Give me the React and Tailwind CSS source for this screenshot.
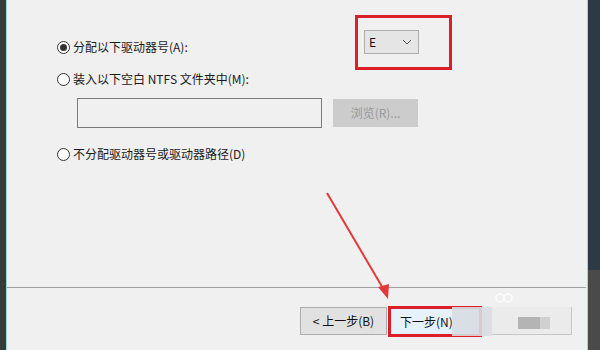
const FONT = { fontFamily: '"Microsoft YaHei", "Noto Sans CJK SC", "Liberation Sans", sans-serif' }

function Radio({ checked, label }) {
  return (
    <div className="flex items-center h-[16px]">
      <span className="w-[13px] h-[13px] rounded-full border border-[#333] bg-white flex items-center justify-center shrink-0">
        {checked && <span className="w-[7px] h-[7px] rounded-full bg-[#333]" />}
      </span>
      <span className="ml-[3px] text-[12px] leading-[16px] text-[#1a1a1a] whitespace-nowrap">{label}</span>
    </div>
  )
}

export default function App() {
  return (
    <div className="w-[600px] h-[350px] flex bg-[#f0f0f0] relative overflow-hidden" style={FONT}>
      <div className="w-[6px] bg-[#363d39]" />
      <div className="w-px bg-[#9fd3e0]" />

      <div className="flex-1 flex flex-col">
        <div className="h-[287px] pl-[50px] pt-[15px]">
          <div className="flex items-start h-[55px]">
            <div className="mt-[24px] w-[298px] shrink-0">
              <Radio checked label="分配以下驱动器号(A):" />
            </div>
            <div className="w-[97px] h-[55px] border-[3px] border-[#db1f28] pl-[6px] pt-[12px]">
              <div className="w-[55px] h-[24px] bg-[#e5e5e5] border border-[#adadad] flex items-center justify-between pl-[4px] pr-[6px]">
                <span className="text-[12px] text-[#111]">E</span>
                <svg width="10" height="6" viewBox="0 0 10 6"><path d="M1 1 L5 5 L9 1" fill="none" stroke="#555" strokeWidth="1" /></svg>
              </div>
            </div>
          </div>
          <div className="mt-[1px]">
            <Radio label="装入以下空白 NTFS 文件夹中(M):" />
          </div>
          <div className="flex ml-[20px] mt-[11px] items-center">
            <div className="w-[245px] h-[30px] bg-[#f0f0f0] border border-[#7a7a7a]" />
            <div className="ml-[11px] w-[85px] h-[28px] bg-[#cccccc] flex items-center justify-center text-[12px] text-[#9a9a9a]">
              浏览(R)...
            </div>
          </div>
          <div className="mt-[18px]">
            <Radio label="不分配驱动器号或驱动器路径(D)" />
          </div>
        </div>

        <div className="h-px bg-[#a0a0a0] mr-[1px]" />

        <div className="flex-1 flex items-start pt-[18px] pl-[293px]">
          <div className="w-[87px] h-[28px] mt-[1px] bg-[#e1e1e1] border border-[#adadad] flex items-center justify-center text-[12px] text-[#111]">
            &lt; 上一步(B)
          </div>
          <div className="relative w-[94px] h-[31px] ml-[1px] border-[3px] border-[#db1f28] bg-[#e5f1fb] flex items-center pl-[9px] text-[12px] text-[#111]">
            下一步(N)
          </div>
          <div className="relative -ml-[30px] mt-[1px] w-[123px] h-[29px] flex items-center">
            <div className="absolute left-0 top-0 w-[40px] h-[29px] bg-[#d8dde2] opacity-90" />
            <div className="absolute left-[40px] top-0 w-[80px] h-[28px] bg-[#ebebeb] border-r border-b border-[#c8c8c8]" />
            <div className="absolute left-[66px] top-[10px] w-[22px] h-[12px] bg-[#b4b4b4]" />
            <div className="absolute left-[88px] top-[10px] w-[10px] h-[12px] bg-[#d0d0d0]" />
          </div>
        </div>
      </div>

      <div className="w-px bg-[#9fd3e0]" />
      <div className="w-[12px] flex flex-col">
        <div className="h-[270px] bg-[#2e3a43]" />
        <div className="flex-1 bg-[#4a4a4a]" />
      </div>

      <svg className="absolute left-0 top-0 pointer-events-none" width="600" height="350">
        <line x1="327" y1="193" x2="384" y2="290" stroke="#e23a3a" strokeWidth="2" />
        <polygon points="388,299 378,287 389,284" fill="#e23a3a" />
        <circle cx="500" cy="298" r="4" fill="none" stroke="#ffffff" strokeWidth="1.5" opacity="0.8" />
        <circle cx="508" cy="298" r="4" fill="none" stroke="#ffffff" strokeWidth="1.5" opacity="0.8" />
      </svg>
    </div>
  )
}
